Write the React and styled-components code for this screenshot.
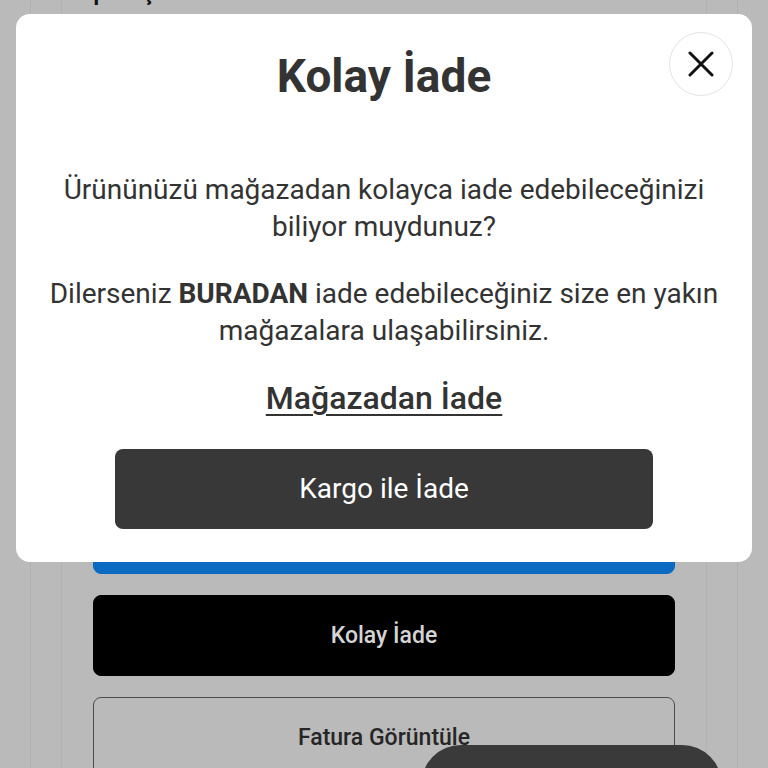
import React from "react";
import styled, { createGlobalStyle } from "styled-components";

const GlobalStyle = createGlobalStyle`
  * { box-sizing: border-box; }
  html, body {
    margin: 0;
    padding: 0;
    background: #bababa;
    font-family: Roboto, "Noto Sans", "Liberation Sans", sans-serif;
    overflow: hidden;
  }
`;

/* ---------- dimmed page behind the dialog ---------- */

const Page = styled.div`
  height: 768px;
  overflow: hidden;
`;

const Shell = styled.div`
  margin: 0 30px;
  min-height: 100vh;
  border-left: 1px solid #b0b0b0;
  border-right: 1px solid #b0b0b0;
`;

const Panel = styled.section`
  margin: 0 30px;
  min-height: 100vh;
  padding: 0 31px;
  border-left: 1px solid #b2b2b2;
  border-right: 1px solid #b2b2b2;
`;

const PageTitle = styled.h1`
  margin: -21px 0 0 -6px;
  font-size: 22px;
  line-height: 28px;
  font-weight: 700;
  color: #111;
`;

const ActionList = styled.div`
  margin-top: 486px;
  display: flex;
  flex-direction: column;
  gap: 21px;
`;

const variants = {
  primary: { bg: "#0b6bc2", fg: "#d6e4f2", border: "#0b6bc2" },
  dark: { bg: "#000000", fg: "#d4d4d4", border: "#000000" },
  outline: { bg: "transparent", fg: "#262626", border: "#4d4d4d" },
};

const ActionButton = styled.button`
  height: 81px;
  width: 100%;
  border-radius: 8px;
  border: 1.5px solid ${(p) => variants[p.$variant].border};
  background: ${(p) => variants[p.$variant].bg};
  color: ${(p) => variants[p.$variant].fg};
  font-family: Roboto, "Liberation Sans", sans-serif;
  font-size: 23px;
  font-weight: 500;
  display: flex;
  align-items: center;
  justify-content: center;
`;

const FloatingPill = styled.div`
  position: fixed;
  left: 421px;
  top: 745px;
  width: 301px;
  height: 80px;
  border-radius: 40px;
  background: #3a3a3a;
`;

/* ---------- dialog ---------- */

const Dialog = styled.div`
  position: fixed;
  top: 14px;
  left: 16px;
  width: 736px;
  background: #ffffff;
  border-radius: 14px;
  padding: 35px 30px 33px;
  display: flex;
  flex-direction: column;
  align-items: center;
  text-align: center;
  color: #333333;
`;

const CloseButton = styled.button`
  position: absolute;
  top: 18px;
  right: 19px;
  width: 64px;
  height: 64px;
  border-radius: 50%;
  border: 1px solid #e4e4e4;
  background: #ffffff;
  display: flex;
  align-items: center;
  justify-content: center;
  padding: 0;
`;

const Title = styled.h2`
  margin: 0;
  font-size: 46px;
  line-height: 1.2;
  font-weight: 700;
  color: #333333;
`;

const Text = styled.p`
  margin: ${(p) => p.$top}px 0 0;
  font-size: 28px;
  line-height: 37px;
  font-weight: 400;
  color: #333333;

  strong {
    font-weight: 700;
  }
`;

const StoreLink = styled.a`
  margin-top: 29px;
  font-size: 32px;
  line-height: 1.3;
  font-weight: 500;
  color: #333333;
  text-decoration: underline;
  text-decoration-thickness: 2px;
  text-underline-offset: 5px;
`;

const CargoButton = styled.button`
  margin-top: 29px;
  width: 538px;
  height: 80px;
  border: none;
  border-radius: 8px;
  background: #383838;
  color: #ffffff;
  font-family: Roboto, "Liberation Sans", sans-serif;
  font-size: 28px;
  font-weight: 400;
`;

const CloseIcon = () => (
  <svg width="26" height="26" viewBox="0 0 26 26" fill="none">
    <path
      d="M2 2 L24 24 M24 2 L2 24"
      stroke="#111"
      strokeWidth="3"
      strokeLinecap="round"
    />
  </svg>
);

export default function App() {
  return (
    <>
      <GlobalStyle />
      <Page>
        <Shell>
          <Panel>
            <PageTitle>İptal İşlemi</PageTitle>
            <ActionList>
              <ActionButton $variant="primary">İade Talebi Oluştur</ActionButton>
              <ActionButton $variant="dark">Kolay İade</ActionButton>
              <ActionButton $variant="outline">Fatura Görüntüle</ActionButton>
            </ActionList>
          </Panel>
        </Shell>
      </Page>
      <FloatingPill />
      <Dialog role="dialog" aria-modal="true">
        <CloseButton aria-label="Kapat">
          <CloseIcon />
        </CloseButton>
        <Title>Kolay İade</Title>
        <Text $top={67}>
          Ürününüzü mağazadan kolayca iade edebileceğinizi biliyor muydunuz?
        </Text>
        <Text $top={30}>
          Dilerseniz <strong>BURADAN</strong> iade edebileceğiniz size en yakın
          mağazalara ulaşabilirsiniz.
        </Text>
        <StoreLink href="#">Mağazadan İade</StoreLink>
        <CargoButton>Kargo ile İade</CargoButton>
      </Dialog>
    </>
  );
}
